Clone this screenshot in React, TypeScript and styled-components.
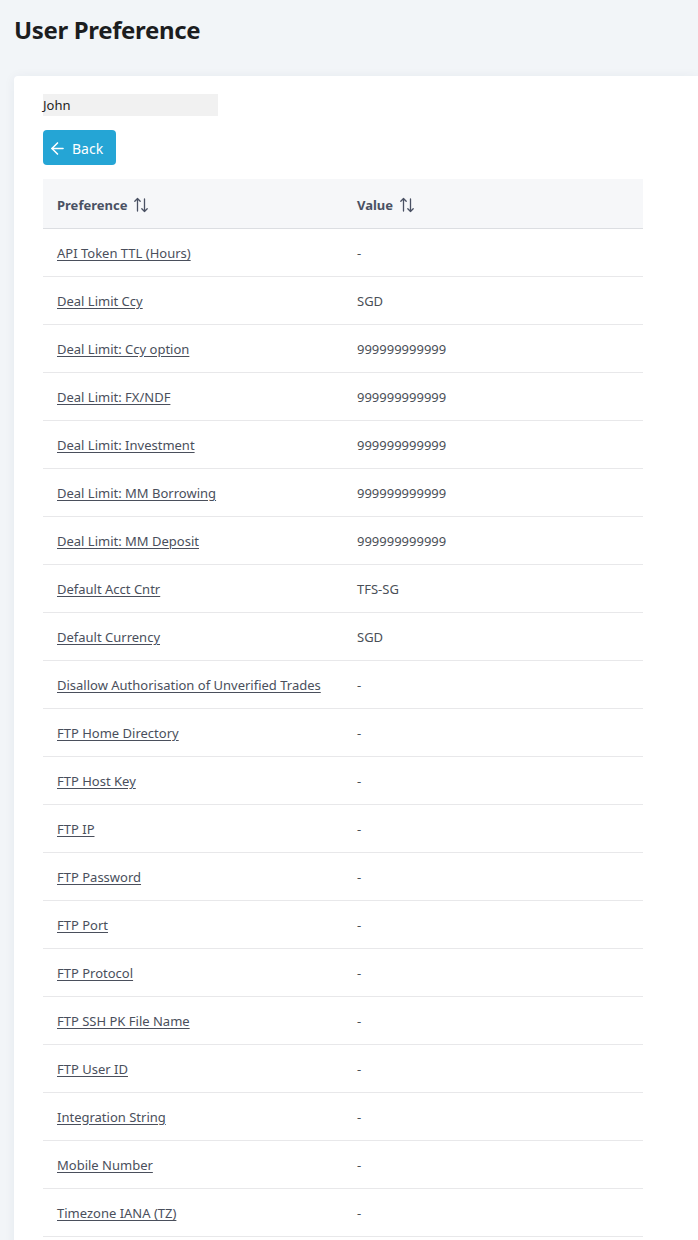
import React from 'react';
import styled, { createGlobalStyle } from 'styled-components';
import { ArrowLeft } from 'lucide-react';

const GlobalStyle = createGlobalStyle`
  html, body {
    margin: 0;
    padding: 0;
    background: #f2f5f8;
    font-family: 'Noto Sans', 'Open Sans', sans-serif;
    color: #4a4f57;
  }
`;

const Page = styled.div`
  padding: 0 0 0 14px;
  overflow: hidden;
`;

const Title = styled.h1`
  margin: 0;
  padding: 13px 0 0;
  height: 76px;
  box-sizing: border-box;
  font-size: 24px;
  font-weight: 700;
  color: #1c1d1f;
  letter-spacing: -0.35px;
`;

const Card = styled.div`
  background: #ffffff;
  border-radius: 4px 0 0 4px;
  box-shadow: 0 1px 12px rgba(30, 50, 80, 0.06);
  padding: 18px 0 0 29px;
  min-height: 1200px;
`;

const NameField = styled.div`
  width: 175px;
  height: 22px;
  background: #f1f1f1;
  font-size: 13px;
  line-height: 22px;
  color: #222;
`;

const BackButton = styled.button`
  margin-top: 14px;
  display: flex;
  align-items: center;
  gap: 5px;
  height: 35px;
  padding: 1px 13px 0 5px;
  border: none;
  border-radius: 4px;
  background: #25a5d5;
  color: #ffffff;
  font-family: inherit;
  font-size: 14px;
`;

const Table = styled.table`
  margin-top: 14px;
  width: 600px;
  border-collapse: collapse;
  font-size: 13px;
`;

const HeadCell = styled.th`
  height: 49px;
  padding: 3px 14px 0;
  text-align: left;
  background: #f6f7f9;
  border-bottom: 1px solid #dcdee2;
  color: #4a5163;
  font-weight: 700;
  width: 50%;
  box-sizing: border-box;
`;

const HeadInner = styled.span`
  display: inline-flex;
  align-items: center;
  gap: 6px;
`;

const Cell = styled.td`
  height: 48px;
  padding: 2px 14px 0;
  border-bottom: 1px solid #e8e8ea;
  box-sizing: border-box;
  color: #4a4f57;
`;

const PrefLink = styled.a`
  color: #4a4f5c;
  text-decoration: underline;
  text-underline-offset: 2px;
  cursor: pointer;
`;

const SortIcon = () => (
  <svg width="16" height="16" viewBox="0 0 16 16" fill="none" stroke="#4a5163" strokeWidth="1.3" strokeLinecap="round" strokeLinejoin="round">
    <path d="M4.5 14V1.5M1.8 4.2L4.5 1.5L7.2 4.2" />
    <path d="M11.5 2V14.5M8.8 11.8L11.5 14.5L14.2 11.8" />
  </svg>
);

const rows: Array<[string, string]> = [
  ['API Token TTL (Hours)', '-'],
  ['Deal Limit Ccy', 'SGD'],
  ['Deal Limit: Ccy option', '999999999999'],
  ['Deal Limit: FX/NDF', '999999999999'],
  ['Deal Limit: Investment', '999999999999'],
  ['Deal Limit: MM Borrowing', '999999999999'],
  ['Deal Limit: MM Deposit', '999999999999'],
  ['Default Acct Cntr', 'TFS-SG'],
  ['Default Currency', 'SGD'],
  ['Disallow Authorisation of Unverified Trades', '-'],
  ['FTP Home Directory', '-'],
  ['FTP Host Key', '-'],
  ['FTP IP', '-'],
  ['FTP Password', '-'],
  ['FTP Port', '-'],
  ['FTP Protocol', '-'],
  ['FTP SSH PK File Name', '-'],
  ['FTP User ID', '-'],
  ['Integration String', '-'],
  ['Mobile Number', '-'],
  ['Timezone IANA (TZ)', '-'],
];

export default function App() {
  return (
    <Page>
      <GlobalStyle />
      <Title>User Preference</Title>
      <Card>
        <NameField>John</NameField>
        <BackButton>
          <ArrowLeft size={19} strokeWidth={2} />
          Back
        </BackButton>
        <Table>
          <thead>
            <tr>
              <HeadCell>
                <HeadInner>
                  Preference <SortIcon />
                </HeadInner>
              </HeadCell>
              <HeadCell>
                <HeadInner>
                  Value <SortIcon />
                </HeadInner>
              </HeadCell>
            </tr>
          </thead>
          <tbody>
            {rows.map(([name, value]) => (
              <tr key={name}>
                <Cell>
                  <PrefLink>{name}</PrefLink>
                </Cell>
                <Cell>{value}</Cell>
              </tr>
            ))}
          </tbody>
        </Table>
      </Card>
    </Page>
  );
}
